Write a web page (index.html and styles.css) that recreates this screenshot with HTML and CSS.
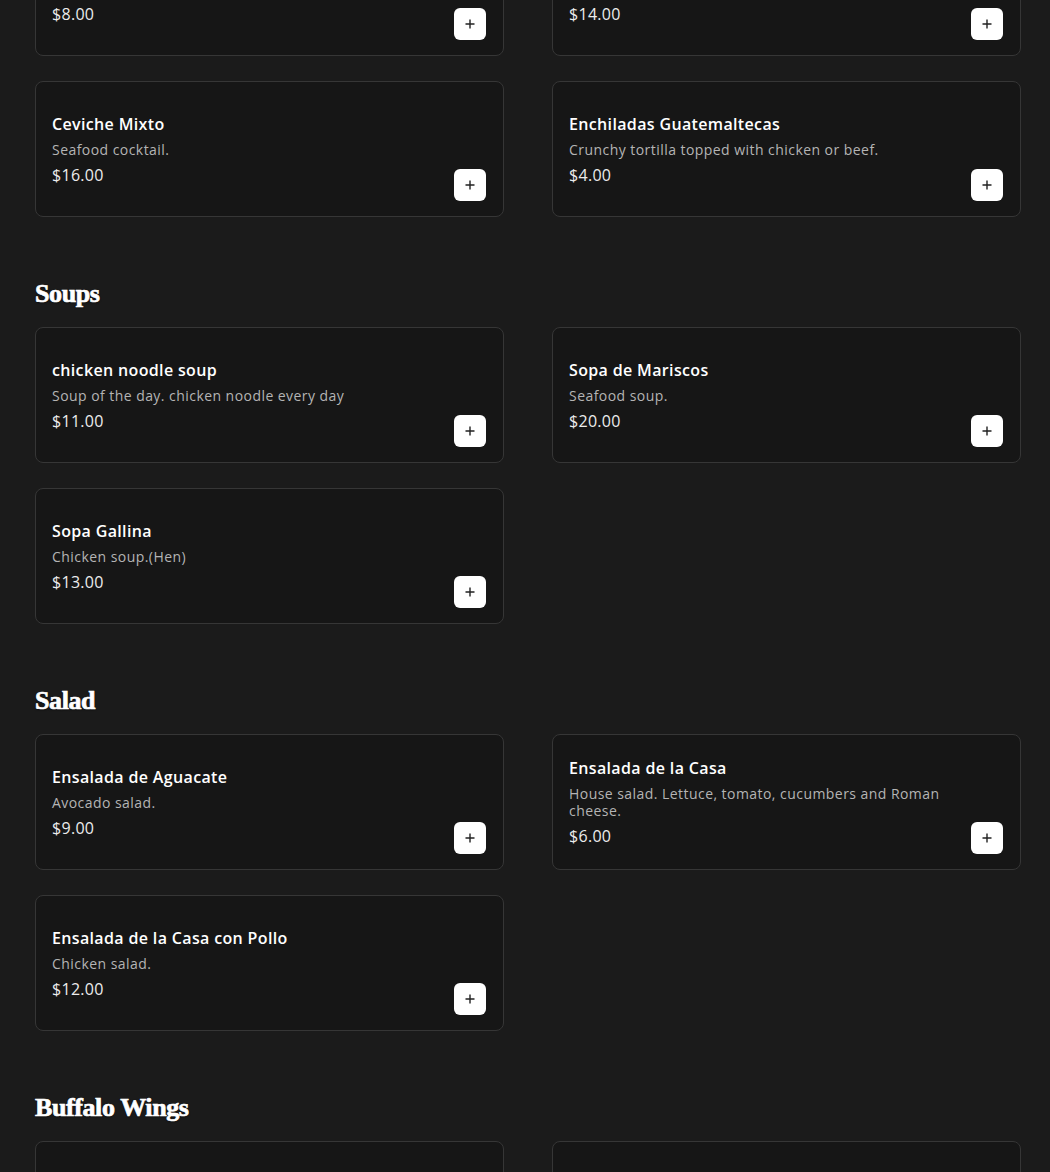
FILE: index.html
```html
<!DOCTYPE html>
<html lang="en">
<head>
<meta charset="utf-8">
<title>Menu</title>
<link rel="stylesheet" href="styles.css">
</head>
<body>
<main class="menu">
  <section class="section section-first">
    <div class="grid">
      <div class="card">
        <div class="info">
          <h3 class="name">Chiles Rellenos</h3>
          <p class="desc">Stuffed peppers.</p>
          <p class="price">$8.00</p>
        </div>
        <button class="add" aria-label="Add"><svg viewBox="0 0 12 12" width="12" height="12"><path d="M6 1.5v9M1.5 6h9" stroke="#222" stroke-width="1.4" fill="none"/></svg></button>
      </div>
      <div class="card">
        <div class="info">
          <h3 class="name">Pepián</h3>
          <p class="desc">Traditional stew.</p>
          <p class="price">$14.00</p>
        </div>
        <button class="add" aria-label="Add"><svg viewBox="0 0 12 12" width="12" height="12"><path d="M6 1.5v9M1.5 6h9" stroke="#222" stroke-width="1.4" fill="none"/></svg></button>
      </div>
      <div class="card">
        <div class="info">
          <h3 class="name">Ceviche Mixto</h3>
          <p class="desc">Seafood cocktail.</p>
          <p class="price">$16.00</p>
        </div>
        <button class="add" aria-label="Add"><svg viewBox="0 0 12 12" width="12" height="12"><path d="M6 1.5v9M1.5 6h9" stroke="#222" stroke-width="1.4" fill="none"/></svg></button>
      </div>
      <div class="card">
        <div class="info">
          <h3 class="name">Enchiladas Guatemaltecas</h3>
          <p class="desc">Crunchy tortilla topped with chicken or beef.</p>
          <p class="price">$4.00</p>
        </div>
        <button class="add" aria-label="Add"><svg viewBox="0 0 12 12" width="12" height="12"><path d="M6 1.5v9M1.5 6h9" stroke="#222" stroke-width="1.4" fill="none"/></svg></button>
      </div>
    </div>
  </section>

  <section class="section">
    <h2 class="heading">Soups</h2>
    <div class="grid">
      <div class="card">
        <div class="info">
          <h3 class="name">chicken noodle soup</h3>
          <p class="desc">Soup of the day. chicken noodle every day</p>
          <p class="price">$11.00</p>
        </div>
        <button class="add" aria-label="Add"><svg viewBox="0 0 12 12" width="12" height="12"><path d="M6 1.5v9M1.5 6h9" stroke="#222" stroke-width="1.4" fill="none"/></svg></button>
      </div>
      <div class="card">
        <div class="info">
          <h3 class="name">Sopa de Mariscos</h3>
          <p class="desc">Seafood soup.</p>
          <p class="price">$20.00</p>
        </div>
        <button class="add" aria-label="Add"><svg viewBox="0 0 12 12" width="12" height="12"><path d="M6 1.5v9M1.5 6h9" stroke="#222" stroke-width="1.4" fill="none"/></svg></button>
      </div>
      <div class="card">
        <div class="info">
          <h3 class="name">Sopa Gallina</h3>
          <p class="desc">Chicken soup.(Hen)</p>
          <p class="price">$13.00</p>
        </div>
        <button class="add" aria-label="Add"><svg viewBox="0 0 12 12" width="12" height="12"><path d="M6 1.5v9M1.5 6h9" stroke="#222" stroke-width="1.4" fill="none"/></svg></button>
      </div>
    </div>
  </section>

  <section class="section">
    <h2 class="heading">Salad</h2>
    <div class="grid">
      <div class="card">
        <div class="info">
          <h3 class="name">Ensalada de Aguacate</h3>
          <p class="desc">Avocado salad.</p>
          <p class="price">$9.00</p>
        </div>
        <button class="add" aria-label="Add"><svg viewBox="0 0 12 12" width="12" height="12"><path d="M6 1.5v9M1.5 6h9" stroke="#222" stroke-width="1.4" fill="none"/></svg></button>
      </div>
      <div class="card">
        <div class="info">
          <h3 class="name">Ensalada de la Casa</h3>
          <p class="desc">House salad. Lettuce, tomato, cucumbers and Roman cheese.</p>
          <p class="price">$6.00</p>
        </div>
        <button class="add" aria-label="Add"><svg viewBox="0 0 12 12" width="12" height="12"><path d="M6 1.5v9M1.5 6h9" stroke="#222" stroke-width="1.4" fill="none"/></svg></button>
      </div>
      <div class="card">
        <div class="info">
          <h3 class="name">Ensalada de la Casa con Pollo</h3>
          <p class="desc">Chicken salad.</p>
          <p class="price">$12.00</p>
        </div>
        <button class="add" aria-label="Add"><svg viewBox="0 0 12 12" width="12" height="12"><path d="M6 1.5v9M1.5 6h9" stroke="#222" stroke-width="1.4" fill="none"/></svg></button>
      </div>
    </div>
  </section>

  <section class="section">
    <h2 class="heading">Buffalo Wings</h2>
    <div class="grid">
      <div class="card">
        <div class="info">
          <h3 class="name">Buffalo Wings</h3>
          <p class="desc">Six wings.</p>
          <p class="price">$10.00</p>
        </div>
        <button class="add" aria-label="Add"><svg viewBox="0 0 12 12" width="12" height="12"><path d="M6 1.5v9M1.5 6h9" stroke="#222" stroke-width="1.4" fill="none"/></svg></button>
      </div>
      <div class="card">
        <div class="info">
          <h3 class="name">Boneless Wings</h3>
          <p class="desc">Six boneless wings.</p>
          <p class="price">$11.00</p>
        </div>
        <button class="add" aria-label="Add"><svg viewBox="0 0 12 12" width="12" height="12"><path d="M6 1.5v9M1.5 6h9" stroke="#222" stroke-width="1.4" fill="none"/></svg></button>
      </div>
    </div>
  </section>
</main>
</body>
</html>
```
FILE: styles.css
```css
* { box-sizing: border-box; }

html, body {
  margin: 0;
  padding: 0;
  background: #1b1b1b;
}

body {
  font-family: "Open Sans", "Noto Sans", sans-serif;
  color: #ffffff;
  overflow: hidden;
}

.menu {
  padding: 0 29px 0 35px;
  margin-top: -80px;
}

.section {
  margin-bottom: 61px;
}

.heading {
  font-family: "Liberation Serif", "DejaVu Serif", serif;
  font-weight: 700;
  font-size: 26px;
  line-height: 32px;
  margin: 0 0 17px;
  color: #ffffff;
  letter-spacing: -0.4px;
  -webkit-text-stroke: 0.7px #ffffff;
  text-shadow: 0 1px 2px rgba(0,0,0,0.6);
}

.grid {
  display: grid;
  grid-template-columns: 469px 469px;
  column-gap: 48px;
  row-gap: 25px;
}

.card {
  display: flex;
  align-items: center;
  justify-content: space-between;
  min-height: 136px;
  padding: 0 17px 0 16px;
  background: #161616;
  border: 1px solid #363636;
  border-radius: 8px;
  position: relative;
}

.info {
  flex: 1;
  padding-right: 14px;
}

.name {
  margin: 0;
  font-size: 16px;
  line-height: 24px;
  font-weight: 600;
  letter-spacing: 0.35px;
  color: #ffffff;
}

.desc {
  margin: 5px 0;
  font-size: 14px;
  line-height: 17px;
  letter-spacing: 0.45px;
  color: #b4b4b4;
}

.price {
  margin: 0;
  font-size: 16px;
  line-height: 24px;
  letter-spacing: 0.3px;
  color: #ececec;
}

.add {
  align-self: flex-end;
  margin-bottom: 15px;
  width: 32px;
  height: 32px;
  flex: 0 0 32px;
  border: none;
  border-radius: 6px;
  background: #ffffff;
  display: flex;
  align-items: center;
  justify-content: center;
  padding: 0;
  cursor: pointer;
}
```
